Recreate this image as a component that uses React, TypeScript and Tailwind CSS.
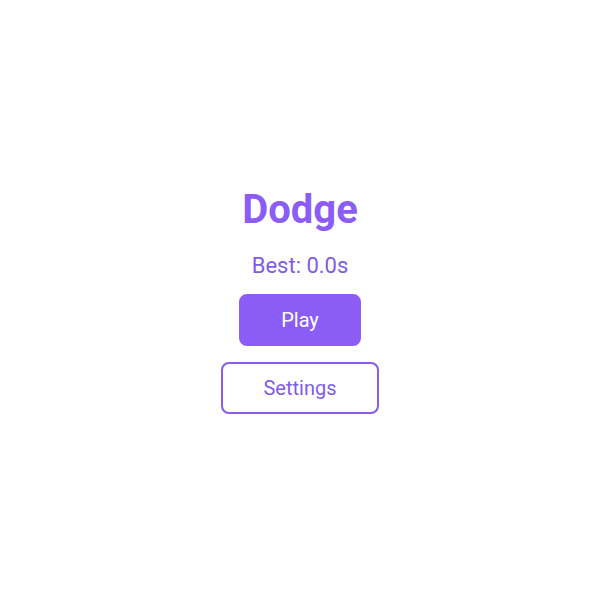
const App: React.FC = () => {
  return (
    <div className="min-h-screen w-full bg-white flex flex-col items-center justify-center font-['Roboto',sans-serif]">
      <h1 className="text-[40px] leading-[48px] font-bold text-[#8b5cf6]">Dodge</h1>
      <div className="mt-[17px] text-[22px] leading-[30px] text-[#7f5ce4]">Best: 0.0s</div>
      <button className="mt-[13px] px-10 py-[10px] border-2 border-[#8b5cf6] rounded-lg bg-[#8b5cf6] text-white text-xl leading-7">
        Play
      </button>
      <button className="mt-4 px-10 py-[10px] border-2 border-[#8a5cec] rounded-lg bg-white text-[#7f5ce4] text-xl leading-7">
        Settings
      </button>
    </div>
  );
};

export default App;
